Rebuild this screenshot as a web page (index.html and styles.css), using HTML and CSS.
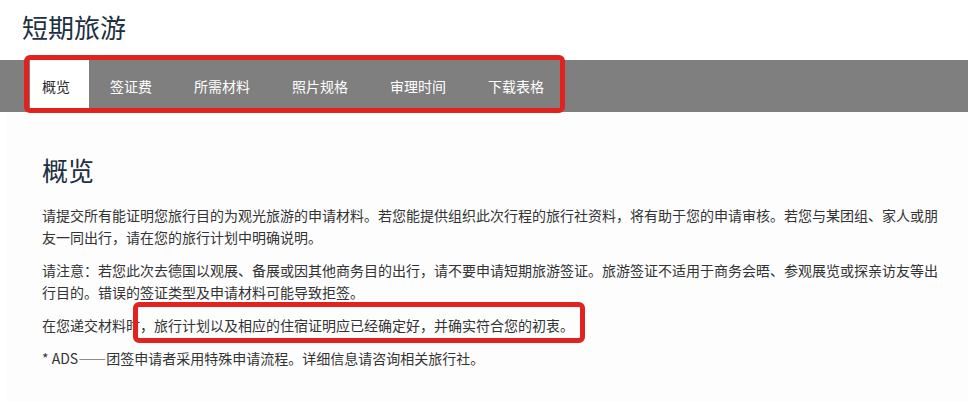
FILE: index.html
```html
<!DOCTYPE html>
<html lang="zh-CN">
<head>
<meta charset="utf-8">
<title>短期旅游</title>
<link rel="stylesheet" href="styles.css">
</head>
<body>
<header class="page-head">
  <h1 class="page-title">短期旅游</h1>
</header>
<div class="nav-wrap">
  <nav class="tabs">
    <a class="tab tab-first active">概览</a>
    <a class="tab">签证费</a>
    <a class="tab">所需材料</a>
    <a class="tab">照片规格</a>
    <a class="tab">审理时间</a>
    <a class="tab">下载表格</a>
  </nav>
  <div class="mark mark-nav"></div>
</div>
<main class="content">
  <h2 class="section-title">概览</h2>
  <p class="para">请提交所有能证明您旅行目的为观光旅游的申请材料。若您能提供组织此次行程的旅行社资料，将有助于您的申请审核。若您与某团组、家人或朋友一同出行，请在您的旅行计划中明确说明。</p>
  <p class="para">请注意：若您此次去德国以观展、备展或因其他商务目的出行，请不要申请短期旅游签证。旅游签证不适用于商务会晤、参观展览或探亲访友等出行目的。错误的签证类型及申请材料可能导致拒签。</p>
  <p class="para para-marked">在您递交材料时，旅行计划以及相应的住宿证明应已经确定好，并确实符合您的初衷。<span class="mark mark-text"></span></p>
  <p class="para">* ADS<span class="dash">——</span>团签申请者采用特殊申请流程。详细信息请咨询相关旅行社。</p>
</main>
</body>
</html>
```

FILE: styles.css
```css
html, body {
  margin: 0;
  padding: 0;
  background: #ffffff;
}

body {
  width: 968px;
  height: 402px;
  overflow: hidden;
  font-family: "Noto Sans CJK SC", "Noto Sans", sans-serif;
  color: #333333;
}

.page-head {
  padding: 10px 0 0 22px;
  height: 60px;
  box-sizing: border-box;
}

.page-title {
  margin: 0;
  font-size: 26px;
  line-height: 34px;
  font-weight: 400;
  color: #1d3042;
}

.nav-wrap {
  position: relative;
}

.tabs {
  display: flex;
  height: 52px;
  background: #7f7f7f;
  padding-left: 30px;
}

.tab {
  display: block;
  padding: 0 21px;
  font-size: 14px;
  line-height: 52px;
  color: #ffffff;
  white-space: nowrap;
}

.tab-first {
  padding-left: 12px;
  padding-right: 19px;
}

.tab.active {
  background: #ffffff;
  color: #2b2b2b;
}

.mark {
  position: absolute;
  border: 5px solid #e1221f;
  border-radius: 6px;
  box-sizing: border-box;
  pointer-events: none;
}

.mark-nav {
  left: 24px;
  top: -5px;
  width: 541px;
  height: 58px;
}

.content {
  margin-left: 7px;
  padding: 40px 0 0 35px;
  background: #fdfdfd;
  height: 290px;
  box-sizing: border-box;
}

.section-title {
  margin: 0 0 16px;
  font-size: 26px;
  line-height: 36px;
  font-weight: 400;
  color: #1d3042;
}

.para {
  margin: 0 0 11px;
  width: 900px;
  font-size: 14px;
  line-height: 22px;
  color: #333333;
}

.dash {
  letter-spacing: -2.5px;
  margin-right: 2.5px;
}

.para-marked {
  position: relative;
}

.mark-text {
  left: 91px;
  top: -12px;
  width: 452px;
  height: 41px;
}
```
